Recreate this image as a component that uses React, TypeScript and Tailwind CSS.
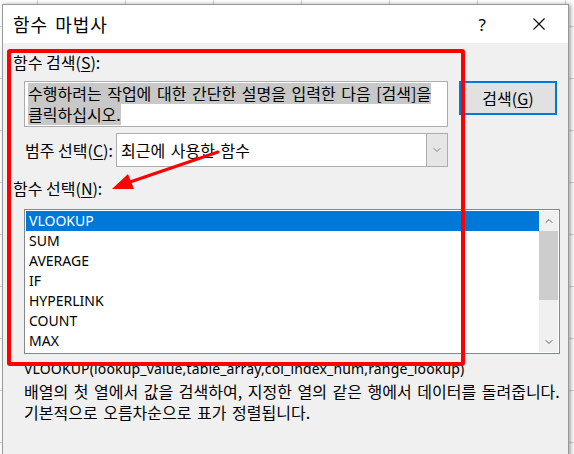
import { ChevronDown, ChevronUp } from 'lucide-react';

const functions = ['VLOOKUP', 'SUM', 'AVERAGE', 'IF', 'HYPERLINK', 'COUNT', 'MAX'];

const ko = "font-['Noto_Sans_CJK_KR','Noto_Sans',sans-serif]";
const latin = "font-['Noto_Sans','Noto_Sans_CJK_KR',sans-serif]";

export default function App() {
  return (
    <div className="relative w-[574px] h-[454px] overflow-hidden bg-white bg-[repeating-linear-gradient(90deg,transparent_0_37px,#d4d4d4_37px_38px,transparent_38px_88px),repeating-linear-gradient(180deg,transparent_0_26px,#d4d4d4_26px_27px,transparent_27px_52px)]">
      {/* dialog window */}
      <div className="absolute left-[2px] top-[4px] w-[567px] h-[460px] bg-[#f0f0f0] border border-[#9a9a9a] shadow-[2px_0_4px_rgba(0,0,0,0.35)] text-black">
        {/* title bar */}
        <div className="h-[38px] bg-white flex items-center pl-[10px]">
          <span className={`${ko} text-[18px] leading-none tracking-[1px] [word-spacing:2px]`}>함수 마법사</span>
          <span className={`${latin} ml-auto text-[17px] leading-none`}>?</span>
          <svg className="ml-[47px] mr-[23px]" width="12" height="12" viewBox="0 0 12 12">
            <path d="M0.5 0.5 L11.5 11.5 M11.5 0.5 L0.5 11.5" stroke="#000" strokeWidth="1.1" />
          </svg>
        </div>

        <div className={`${ko} text-[16px] pl-[10px]`}>
          <div className="h-[38px] flex items-center">
            함수 검색(<span className="underline underline-offset-2">S</span>):
          </div>

          <div className="flex items-start ml-[11px]">
            <div className="w-[424px] h-[46px] bg-white border border-[#acacac] px-[3px] pt-[1px] leading-[21px] [word-spacing:2px]">
              <span className="block w-fit bg-[#c8c8c8]">수행하려는 작업에 대한 간단한 설명을 입력한 다음 [검색]을</span>
              <span className="block w-fit bg-[#c8c8c8]">클릭하십시오.</span>
            </div>
            <button className="ml-[11px] w-[98px] h-[34px] bg-[#e1e1e1] border-2 border-[#0078d7] leading-none">
              검색(<span className="underline underline-offset-2">G</span>)
            </button>
          </div>

          <div className="flex items-center mt-[6px] ml-[12px]">
            <span className="w-[91px]">
              범주 선택(<span className="underline underline-offset-2">C</span>):
            </span>
            <div className="w-[332px] h-[34px] bg-white border border-[#acacac] flex items-stretch">
              <span className="flex-1 flex items-center pl-[4px] [word-spacing:2px]">최근에 사용한 함수</span>
              <span className="w-[21px] bg-[#e5e5e5] border-l border-[#acacac] flex items-center justify-center">
                <ChevronDown className="w-[12px] h-[12px] text-[#555]" strokeWidth={1.4} />
              </span>
            </div>
          </div>

          <div className="h-[42px] flex items-center">
            함수 선택(<span className="underline underline-offset-2">N</span>):
          </div>
        </div>

        {/* function list */}
        <div className="ml-[21px] w-[536px] h-[145px] bg-white border border-[#828790] flex p-[1px]">
          <ul className={`${latin} flex-1 text-[14px]`}>
            {functions.map((name, i) => (
              <li
                key={name}
                className={`h-[20px] leading-[20px] pl-[3px] ${i === 0 ? 'bg-[#0078d7] text-white' : ''}`}
              >
                {name}
              </li>
            ))}
          </ul>
          <div className="w-[19px] bg-[#f0f0f0] flex flex-col">
            <div className="h-[20px] flex items-center justify-center">
              <ChevronUp className="w-[12px] h-[12px] text-[#606060]" strokeWidth={2} />
            </div>
            <div className="h-[69px] bg-[#cdcdcd]" />
            <div className="flex-1" />
            <div className="h-[20px] flex items-center justify-center">
              <ChevronDown className="w-[12px] h-[12px] text-[#606060]" strokeWidth={2} />
            </div>
          </div>
        </div>

        <div className={`${latin} ml-[21px] mt-[5px] text-[14px] leading-[20px] tracking-[0.15px]`}>
          VLOOKUP(lookup_value,table_array,col_index_num,range_lookup)
        </div>
        <div className={`${ko} ml-[21px] mt-[2px] text-[16px] leading-[21px] [word-spacing:2px]`}>
          배열의 첫 열에서 값을 검색하여, 지정한 열의 같은 행에서 데이터를 돌려줍니다.
          <br />
          기본적으로 오름차순으로 표가 정렬됩니다.
        </div>
      </div>

      {/* red annotation box and arrow */}
      <div className="absolute left-[7px] top-[49px] w-[458px] h-[317px] border-[4px] border-[#ff0000] rounded-[3px]" />
      <svg className="absolute left-0 top-0" width="574" height="454">
        <line x1="218" y1="152" x2="130" y2="182" stroke="#ff0000" strokeWidth="3" strokeLinecap="round" />
        <polygon points="112,189 128,174 134,189" fill="#ff0000" />
      </svg>
    </div>
  );
}
